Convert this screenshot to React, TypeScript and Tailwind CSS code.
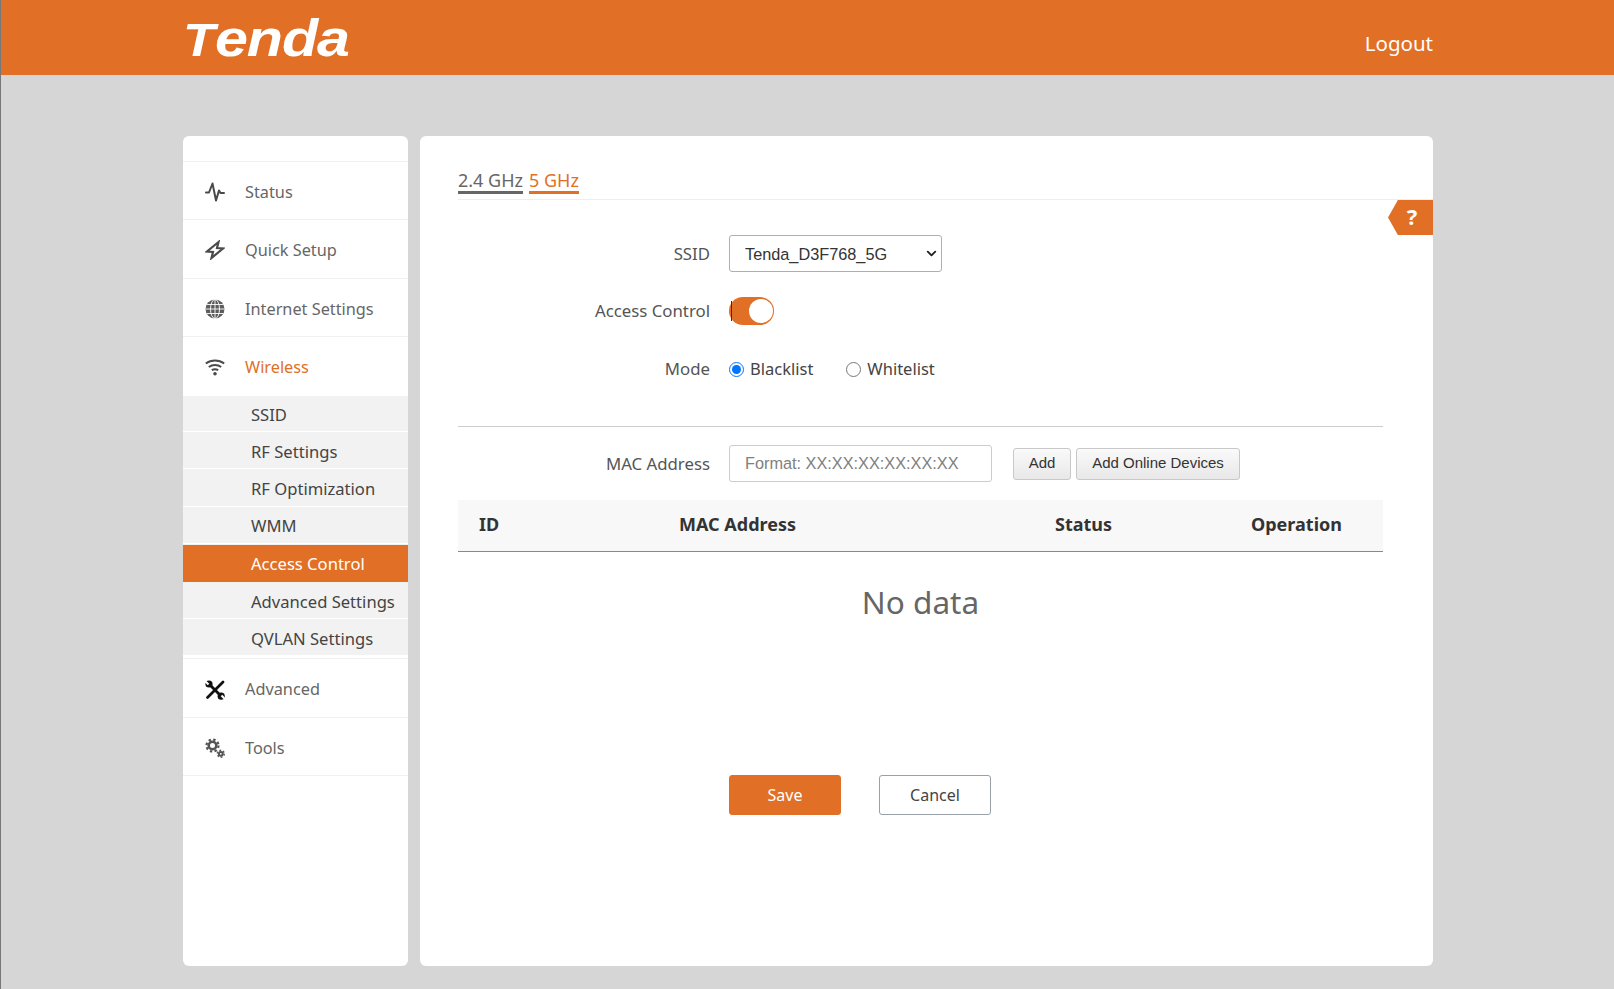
import * as React from "react";
import { ChevronDown } from "lucide-react";

const StatusIcon = () => (
  <svg viewBox="0 0 20 20" className="w-[20px] h-[20px]" fill="none" stroke="#4a4a4a" strokeWidth="2" strokeLinejoin="round" strokeLinecap="round">
    <path d="M1 10.5h3L7.500 1.500 11 18.500l3-10 1.500 2.500h3.500" />
  </svg>
);

const BoltIcon = () => (
  <svg viewBox="0 0 20 20" className="w-[20px] h-[20px]" fill="none" stroke="#4a4a4a" strokeWidth="2.200" strokeLinejoin="miter">
    <path d="M13.500 2 2 11.500 8 12 6.500 18 18 8.500 12 8z" />
  </svg>
);

const GlobeIcon = () => (
  <svg viewBox="0 0 20 20" className="w-[20px] h-[20px]">
    <circle cx="10" cy="10" r="9.500" fill="#5c5c5c" />
    <g fill="none" stroke="#fff" strokeWidth=".9">
      <ellipse cx="10" cy="10" rx="4.500" ry="9.500" />
      <path d="M10 .5v19M.5 10h19M1.600 5.500h16.800M1.600 14.500h16.800" />
    </g>
  </svg>
);

const WifiIcon = () => (
  <svg viewBox="0 0 20 20" className="w-[20px] h-[20px]" fill="none" stroke="#4a4a4a" strokeWidth="2">
    <path d="M.8 6.500c5.400-4 13-4 18.400 0" />
    <path d="M3.800 10c3.600-2.700 8.800-2.700 12.400 0" />
    <path d="M6.800 13.200c2-1.300 4.400-1.300 6.400 0" />
    <circle cx="10" cy="16.800" r="1.800" fill="#4a4a4a" stroke="none" />
  </svg>
);

const ToolsIcon = () => (
  <svg viewBox="0 0 20 20" className="w-[20px] h-[20px]" fill="none" stroke="#111" strokeWidth="2.800">
    <path d="M4 4 16 16" />
    <path d="M18 2 2.500 17.500" strokeLinecap="round" />
    <circle cx="4" cy="4" r="3.600" fill="#111" stroke="none" />
    <circle cx="16.200" cy="16.200" r="3.600" fill="#111" stroke="none" />
    <path d="M0 1 3.500 4.500" stroke="#fff" strokeWidth="2.200" />
    <path d="M20 19 16.500 15.500" stroke="#fff" strokeWidth="2.200" />
  </svg>
);

const GearsIcon = () => (
  <svg viewBox="0 0 20 20" className="w-[20px] h-[20px]" fill="none" stroke="#555">
    <circle cx="7.500" cy="7.500" r="3.800" strokeWidth="2.600" />
    <circle cx="7.500" cy="7.500" r="6" strokeWidth="2.200" strokeDasharray="2.400 2.310" />
    <circle cx="15.800" cy="15.800" r="1.900" strokeWidth="2" />
    <circle cx="15.800" cy="15.800" r="3.400" strokeWidth="1.600" strokeDasharray="1.800 1.760" />
  </svg>
);

const menuTop = [
  { title: "Status", icon: StatusIcon },
  { title: "Quick Setup", icon: BoltIcon },
  { title: "Internet Settings", icon: GlobeIcon },
];

const subItems = ["SSID", "RF Settings", "RF Optimization", "WMM", "Access Control", "Advanced Settings", "QVLAN Settings"];

const MenuRow = ({ title, icon: Icon }: { title: string; icon: () => React.ReactElement }) => (
  <div className="h-[58.33px] flex items-center pl-[22px] pt-[3px] border-b border-[#f0f0f0] text-[16.3px]">
    <Icon />
    <span className="ml-[20px] text-[#666]">{title}</span>
  </div>
);

const FormLabel = ({ children }: { children: React.ReactNode }) => (
  <div className="w-[309px] pr-[19px] text-right text-[16.8px] text-[#555]">{children}</div>
);

export default function App() {
  return (
    <div
      className="h-[989px] bg-[#d6d6d6] border-l border-[#777] overflow-hidden text-[16px]"
      style={{ fontFamily: '"Noto Sans", "Open Sans", sans-serif' }}
    >
      {/* Header */}
      <header className="h-[75px] bg-[#e17026] pl-[182px] pr-[181px] flex items-center justify-between">
        <span
          className="flex items-baseline text-white italic font-bold leading-none origin-left scale-x-[1.14]"
          style={{ fontFamily: '"Liberation Sans", sans-serif' }}
        >
          <span className="text-[46px]">T</span>
          <span className="text-[52px] tracking-[-1px]">enda</span>
        </span>
        <span className="text-white text-[20.5px] mt-[12px]">Logout</span>
      </header>

      <div className="pl-[182px] pr-[181px] pt-[61px] flex gap-[12px]">
        {/* Sidebar */}
        <aside className="w-[225px] h-[830px] bg-white rounded-[6px] overflow-hidden shrink-0">
          <div className="h-[26px] border-b border-[#f0f0f0]" />
          {menuTop.map((item) => (
            <MenuRow key={item.title} title={item.title} icon={item.icon} />
          ))}
          <div className="h-[59px] flex items-center pl-[22px] pt-[2px] text-[16.3px]">
            <WifiIcon />
            <span className="ml-[20px] text-[#e17026]">Wireless</span>
          </div>
          <ul className="bg-[#f2f2f2] mb-[2px] text-[16.6px]">
            {subItems.map((s) =>
              s === "Access Control" ? (
                <li key={s} className="h-[37px] mb-[1px] pt-[2px] flex items-center pl-[68px] bg-[#e17026] text-white">
                  {s}
                </li>
              ) : (
                <li key={s} className="h-[36.25px] mb-[1px] pt-[3px] flex items-center pl-[68px] text-[#444] border-b border-white">
                  {s}
                </li>
              )
            )}
          </ul>
          <div className="border-t border-[#f0f0f0]">
            <MenuRow title="Advanced" icon={ToolsIcon} />
            <MenuRow title="Tools" icon={GearsIcon} />
          </div>
        </aside>

        {/* Main panel */}
        <main className="relative w-[1013px] h-[830px] bg-white rounded-[6px] overflow-hidden">
          <div className="ml-[38px] pt-[31px] h-[64px] border-b border-[#eeeeee] flex gap-[6px] text-[18px] leading-[27px]">
            <span className="h-[27px] border-b-[3px] border-[#666] text-[#666]">2.4 GHz</span>
            <span className="h-[27px] border-b-[3px] border-[#e17026] text-[#e17026]">5 GHz</span>
          </div>

          <div
            className="absolute top-[64px] right-0 w-[45px] h-[35px] bg-[#e17026] flex items-center justify-center pl-[3px] pb-[3px] text-white font-bold text-[22px]"
            style={{ clipPath: "polygon(22% 0, 100% 0, 100% 100%, 22% 100%, 0 50%)" }}
          >
            ?
          </div>

          <div className="mt-[35px] flex items-center">
            <FormLabel>SSID</FormLabel>
            <div className="relative">
              <select
                defaultValue="Tenda_D3F768_5G"
                className="block appearance-none w-[213px] h-[37px] pl-[15px] pt-[2px] bg-white border border-[#aab0b8] rounded-[3px] text-[#333] text-[16.3px]"
                style={{ fontFamily: '"Liberation Sans", sans-serif' }}
              >
                <option>Tenda_D3F768_5G</option>
              </select>
              <ChevronDown size={15} strokeWidth={3} className="absolute right-[3px] top-[11px] text-[#222] pointer-events-none" />
            </div>
          </div>

          <div className="mt-[25px] flex items-center h-[28px]">
            <FormLabel>Access Control</FormLabel>
            <div className="relative w-[45px] h-[28px] rounded-full bg-[#e17026]">
              <div className="absolute left-[2px] top-[4px] w-px h-[20px] bg-[#333]" />
              <div className="absolute right-[1px] top-[2px] w-[24px] h-[24px] rounded-full bg-white" />
            </div>
          </div>

          <div className="mt-[30px] flex items-center h-[28px] text-[16.5px]">
            <FormLabel>Mode</FormLabel>
            <label className="flex items-center text-[#444]">
              <input type="radio" name="mode" defaultChecked className="w-[15px] h-[15px] m-0" />
              <span className="ml-[6px]">Blacklist</span>
            </label>
            <label className="flex items-center text-[#444] ml-[33px]">
              <input type="radio" name="mode" className="w-[15px] h-[15px] m-0" />
              <span className="ml-[6px]">Whitelist</span>
            </label>
          </div>

          <div className="ml-[38px] mr-[50px] mt-[43px] border-t border-[#cccccc]" />

          <div className="mt-[18px] flex items-center">
            <FormLabel>MAC Address</FormLabel>
            <input
              placeholder="Format: XX:XX:XX:XX:XX:XX"
              className="w-[263px] h-[37px] px-[15px] border border-[#ccc] rounded-[3px] text-[16.3px] placeholder:text-[#808080] outline-none"
              style={{ fontFamily: '"Liberation Sans", sans-serif' }}
            />
            <div className="flex gap-[5px] ml-[21px] text-[15px] text-[#333]" style={{ fontFamily: '"Liberation Sans", sans-serif' }}>
              <button className="w-[58px] h-[32px] border border-[#c8c8c8] rounded-[3px] bg-linear-to-b from-[#fafafa] to-[#e8e8e8]">Add</button>
              <button className="w-[164px] h-[32px] border border-[#c8c8c8] rounded-[3px] bg-linear-to-b from-[#fafafa] to-[#e8e8e8]">Add Online Devices</button>
            </div>
          </div>

          <div className="ml-[38px] mr-[50px] mt-[18px]">
            <div className="h-[52px] pb-[2px] bg-[#f8f8f8] border-b border-[#e17026] grid grid-cols-[221px_376px_196px_132px] items-center font-bold text-[18px] text-[#333]">
              <span className="pl-[21px]">ID</span>
              <span>MAC Address</span>
              <span>Status</span>
              <span>Operation</span>
            </div>
            <div className="mt-[28px] text-center text-[31.5px] leading-[44px] text-[#666]">No data</div>
          </div>

          <div className="mt-[151px] ml-[309px] flex gap-[38px]">
            <button className="w-[112px] h-[40px] bg-[#e17026] border border-[#e17026] rounded-[3px] text-white">Save</button>
            <button className="w-[112px] h-[40px] bg-white border border-[#99a0a8] rounded-[3px] text-[#444]">Cancel</button>
          </div>
        </main>
      </div>
    </div>
  );
}
